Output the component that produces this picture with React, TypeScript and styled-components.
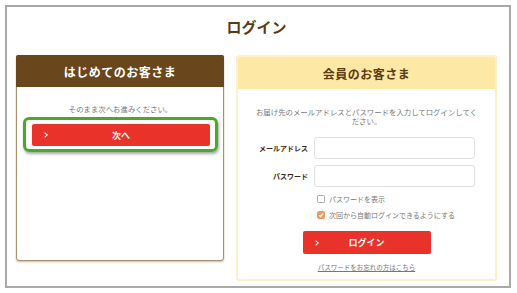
import React from "react";
import styled, { createGlobalStyle } from "styled-components";

const GlobalStyle = createGlobalStyle`
  html, body {
    margin: 0;
    padding: 0;
    background: #fff;
  }
  body {
    font-family: "Noto Sans CJK JP", "Noto Sans", sans-serif;
  }
`;

const Frame = styled.div`
  margin: 5px;
  height: 279px;
  border: 2px solid #a9a9a9;
  background: #fff;
  display: flex;
  flex-direction: column;
  padding: 0 12px 0 9px;
  box-sizing: content-box;
  width: 481px;
`;

const Title = styled.h1`
  margin: 0;
  padding-top: 10px;
  height: 38px;
  line-height: 20px;
  text-align: center;
  font-size: 15px;
  font-weight: 700;
  color: #5b3a14;
`;

const Columns = styled.div`
  display: flex;
  gap: 12px;
  align-items: flex-start;
`;

const Panel = styled.section<{ $variant: "guest" | "member" }>`
  box-sizing: border-box;
  display: flex;
  flex-direction: column;
  border-radius: 3px;
  background: #fff;
  ${(p) =>
    p.$variant === "guest"
      ? `
    width: 208px;
    height: 206px;
    border: 1px solid #a8906e;
    box-shadow: 0 1px 2px rgba(90, 60, 20, 0.35);
  `
      : `
    width: 261px;
    border: 2px solid #fdf1c9;
  `}
`;

const PanelHeader = styled.div<{ $variant: "guest" | "member" }>`
  height: 32px;
  display: flex;
  align-items: center;
  justify-content: center;
  font-size: 12px;
  font-weight: 700;
  letter-spacing: 0.5px;
  background: ${(p) => (p.$variant === "guest" ? "#6a461d" : "#fde9a5")};
  color: ${(p) => (p.$variant === "guest" ? "#fff" : "#5b3a14")};
  margin: ${(p) => (p.$variant === "guest" ? "-1px -1px 0" : "0")};
  border-radius: 2px 2px 0 0;
`;

const Note = styled.p<{ $inset?: number }>`
  margin: 0;
  padding: 0 ${(p) => p.$inset ?? 0}px;
  font-size: 7.4px;
  line-height: 9px;
  color: #777;
  text-align: center;
`;

const GuestBody = styled.div`
  display: flex;
  flex-direction: column;
  padding: 17px 5px 0 6px;
  gap: 4px;
`;

const Highlight = styled.div`
  border: 3px solid #4aa82c;
  border-radius: 6px;
  padding: 4px 5px 3px 6px;
  box-shadow: 1px 2px 3px rgba(0, 0, 0, 0.35);
`;

const RedButton = styled.button<{ $width?: number; $height: number }>`
  position: relative;
  box-sizing: border-box;
  width: ${(p) => (p.$width ? `${p.$width}px` : "100%")};
  height: ${(p) => p.$height}px;
  border: none;
  border-radius: 2px;
  background: #e8322a;
  color: #fff;
  font-family: inherit;
  font-size: 9px;
  font-weight: 700;
  display: flex;
  align-items: center;
  justify-content: center;
  padding: 0;
  cursor: pointer;
`;

const Chevron = styled.span`
  position: absolute;
  left: 11px;
  top: 50%;
  width: 3px;
  height: 3px;
  border-top: 1.5px solid #fff;
  border-right: 1.5px solid #fff;
  transform: translateY(-50%) rotate(45deg);
`;

const MemberBody = styled.div`
  display: flex;
  flex-direction: column;
  padding: 18px 7px 7px;
`;

const Field = styled.label`
  display: flex;
  align-items: center;
  gap: 6px;
  margin-top: 6px;
  &:first-of-type {
    margin-top: 12px;
  }
`;

const FieldLabel = styled.span`
  width: 63px;
  text-align: right;
  font-size: 7px;
  font-weight: 700;
  color: #3d2a14;
`;

const Input = styled.input`
  box-sizing: border-box;
  width: 161px;
  height: 22px;
  border: 1.5px solid #e2e2e2;
  border-radius: 3px;
  background: #fff;
  outline: none;
`;

const Checks = styled.div`
  display: flex;
  flex-direction: column;
  gap: 6px;
  padding: 7px 0 0 72px;
`;

const CheckRow = styled.div`
  display: flex;
  align-items: center;
  gap: 4px;
  font-size: 7px;
  color: #777;
  line-height: 10px;
`;

const Box = styled.span<{ $checked?: boolean }>`
  box-sizing: border-box;
  width: 8px;
  height: 8px;
  border-radius: 1.5px;
  border: 1px solid ${(p) => (p.$checked ? "#ef9b5d" : "#aaa")};
  background: ${(p) => (p.$checked ? "#ef9b5d" : "#fff")};
  display: flex;
  align-items: center;
  justify-content: center;
`;

const ButtonRow = styled.div`
  display: flex;
  justify-content: center;
  padding-top: 11px;
`;

const ForgotLink = styled.a`
  display: block;
  margin-top: 8px;
  text-align: center;
  font-size: 6.5px;
  color: #777;
  text-decoration: underline;
`;

export default function App() {
  return (
    <>
      <GlobalStyle />
      <Frame>
        <Title>ログイン</Title>
        <Columns>
          <Panel $variant="guest">
            <PanelHeader $variant="guest">はじめてのお客さま</PanelHeader>
            <GuestBody>
              <Note>そのまま次へお進みください。</Note>
              <Highlight>
                <RedButton $height={22}>
                  <Chevron />
                  次へ
                </RedButton>
              </Highlight>
            </GuestBody>
          </Panel>
          <Panel $variant="member">
            <PanelHeader $variant="member">会員のお客さま</PanelHeader>
            <MemberBody>
              <Note $inset={8}>
                お届け先のメールアドレスとパスワードを入力してログインしてください。
              </Note>
              <Field>
                <FieldLabel>メールアドレス</FieldLabel>
                <Input type="email" />
              </Field>
              <Field>
                <FieldLabel>パスワード</FieldLabel>
                <Input type="password" />
              </Field>
              <Checks>
                <CheckRow>
                  <Box />
                  パスワードを表示
                </CheckRow>
                <CheckRow>
                  <Box $checked>
                    <svg width="6" height="6" viewBox="0 0 6 6">
                      <path d="M1 3.2 L2.5 4.6 L5 1.5" stroke="#fff" strokeWidth="1.2" fill="none" />
                    </svg>
                  </Box>
                  次回から自動ログインできるようにする
                </CheckRow>
              </Checks>
              <ButtonRow>
                <RedButton $width={128} $height={23}>
                  <Chevron />
                  ログイン
                </RedButton>
              </ButtonRow>
              <ForgotLink href="#">パスワードをお忘れの方はこちら</ForgotLink>
            </MemberBody>
          </Panel>
        </Columns>
      </Frame>
    </>
  );
}
